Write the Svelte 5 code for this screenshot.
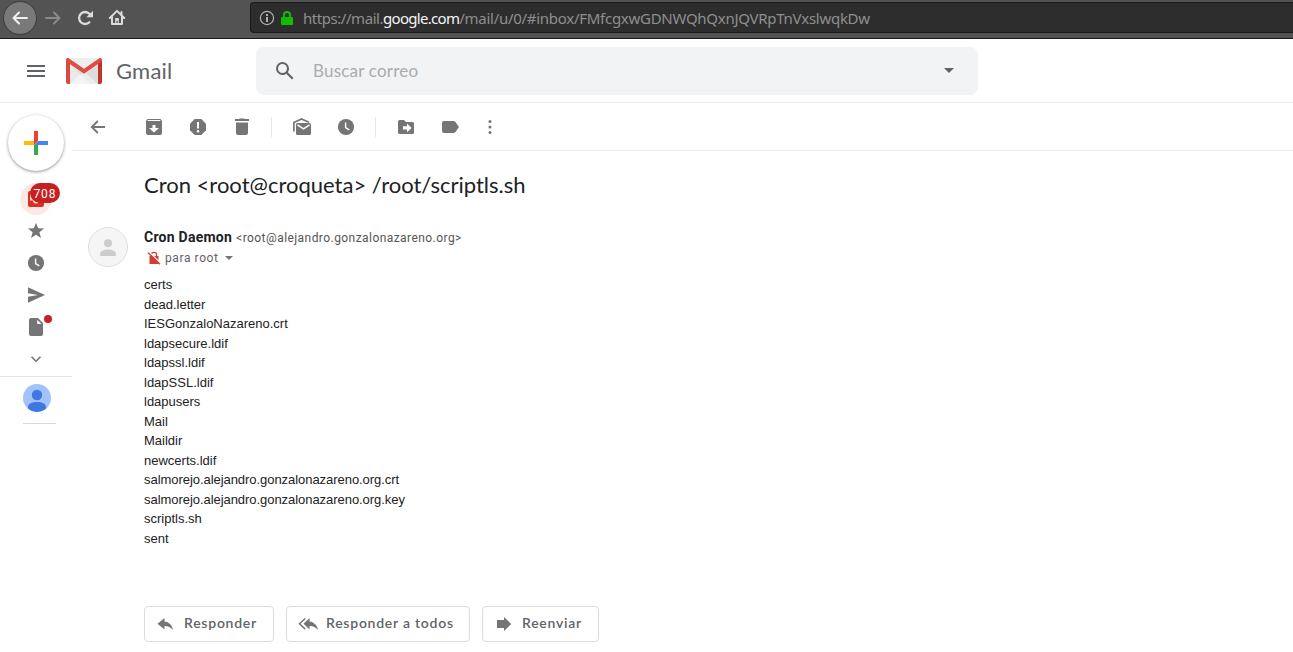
<script>
  const files = [
    'certs', 'dead.letter', 'IESGonzaloNazareno.crt', 'ldapsecure.ldif', 'ldapssl.ldif',
    'ldapSSL.ldif', 'ldapusers', 'Mail', 'Maildir', 'newcerts.ldif',
    'salmorejo.alejandro.gonzalonazareno.org.crt',
    'salmorejo.alejandro.gonzalonazareno.org.key', 'scriptls.sh', 'sent'
  ];
</script>

{#snippet clock()}
  <svg class="i20" viewBox="0 0 20 20"><circle cx="10" cy="10" r="8.1" fill="#757575" /><path d="M9.6 5.6v4.9l3.7 2.3" fill="none" stroke="#fff" stroke-width="1.4" /></svg>
{/snippet}

<div class="page">
  <div class="browser">
    <div class="back">
      <svg width="20" height="20" viewBox="0 0 20 20"><path d="M17 10H3.5M9 4.500 3.500 10l5.500 5.500" fill="none" stroke="#f0f0f0" stroke-width="2" stroke-linecap="round" stroke-linejoin="round" /></svg>
    </div>
    <svg class="fwd" width="20" height="20" viewBox="0 0 20 20"><path d="M3 10h13.500M11 4.500l5.500 5.500-5.500 5.500" fill="none" stroke="#8a8a8a" stroke-width="2" stroke-linecap="round" stroke-linejoin="round" /></svg>
    <svg class="reload" width="20" height="20" viewBox="0 0 20 20"><path d="M14.400 14.200A6 6 0 1 1 14.600 6" fill="none" stroke="#dcdcdc" stroke-width="2.300" stroke-linecap="round" /><path d="M18 2.800v6.400h-6.600z" fill="#dcdcdc" /></svg>
    <svg class="home" width="20" height="20" viewBox="0 0 20 20"><path d="M2.800 10 10 2.900l7.200 7.100M5 9v7h10V9M14.500 4v3" fill="none" stroke="#dcdcdc" stroke-width="2" stroke-linecap="round" stroke-linejoin="round" /><path d="M8.200 16v-6h3.600v6h-1.100v-3.200H9.500V16z" fill="#dcdcdc" /></svg>
    <div class="url">
      <svg width="16" height="16" viewBox="0 0 16 16"><circle cx="8" cy="8" r="6.600" fill="none" stroke="#b0b0b0" stroke-width="1.200" /><path d="M7 4h2v2H7zM7 7h2v5H7z" fill="#b0b0b0" /></svg>
      <svg class="lock" width="14" height="16" viewBox="0 0 14 16"><path d="M3.900 8V5a3.100 3.100 0 0 1 6.200 0v3" fill="none" stroke="#12bc00" stroke-width="2" /><rect x="1" y="7" width="12" height="8" rx="1" fill="#12bc00" /></svg>
      <span class="address"><span class="scheme">https://mail.</span><b>google.com</b>/mail/u/0/#inbox/FMfcgxwGDNWQhQxnJQVRpTnVxslwqkDw</span>
    </div>
  </div>

  <header>
    <svg class="burger" width="18" height="12" viewBox="0 0 18 12"><path d="M0 1h18M0 6h18M0 11h18" stroke="#5f6368" stroke-width="2" /></svg>
    <svg class="logo" width="36" height="26" viewBox="0 0 36 26">
      <rect width="36" height="26" rx="2" fill="#e9e9e9" />
      <path d="M4 26 15 15l3 2 3-2 11 11z" fill="#f5f5f5" />
      <path d="M4 6 24 26h8V7L18 17z" fill="#d5d5d5" opacity=".65" />
      <path d="M4 26 18 14l14 12z" fill="#f3f3f3" opacity=".65" />
      <path d="M0 2v22a2 2 0 0 0 2 2h2V5z" fill="#d64b3f" />
      <path d="M36 2v22a2 2 0 0 1-2 2h-2V5z" fill="#c13529" />
      <path d="M1.500 0h33L18 11.500z" fill="#eee" />
      <path d="M0 2C0 .2 1.800-.4 3 .5L18 10.700 33 .5c1.300-.9 3-.2 3 1.500 0 .8-.3 1.500-1 2L18 15.800 1 4C.3 3.500 0 2.800 0 2z" fill="#df4d42" />
    </svg>
    <span class="brand">Gmail</span>
    <div class="search">
      <svg width="24" height="24" viewBox="0 0 24 24"><path fill="#5f6368" d="M20.490 19l-5.730-5.730C15.530 12.200 16 10.910 16 9.500A6.500 6.500 0 1 0 9.500 16c1.410 0 2.700-.47 3.770-1.240L19 20.490 20.490 19zM5 9.500C5 7.010 7.010 5 9.500 5S14 7.010 14 9.500 11.990 14 9.500 14 5 11.990 5 9.500z" /></svg>
      <span class="hint">Buscar correo</span>
      <svg class="drop" width="10" height="5" viewBox="0 0 10 5"><path d="M0 0h10L5 5z" fill="#5f6368" /></svg>
    </div>
  </header>

  <div class="body">
    <nav>
      <div class="compose">
        <svg width="24" height="24" viewBox="0 0 24 24"><path d="M10 0h4v10l-4 4z" fill="#ea4335" /><path d="M14 10h10v4H10z" fill="#4285f4" /><path d="M10 14h4v10h-4z" fill="#34a853" /><path d="M0 10h10v4H0z" fill="#fbbc05" /></svg>
      </div>
      <div class="item">
        <div class="inbox">
          <svg class="i20" viewBox="0 0 20 20"><rect x="2" y="2" width="16" height="16" rx="2" fill="#d93025" /><path d="M4 4h12v7.500h-3a3 3 0 0 1-6 0H4z" fill="#fce8e6" /></svg>
          <span class="count">708</span>
        </div>
      </div>
      <div class="item"><svg class="i20" viewBox="0 0 20 20"><path d="m10 1.700 2.100 5.600 6 .3-4.700 3.700 1.600 5.800-5-3.300-5 3.300 1.600-5.800-4.700-3.700 6-.3z" fill="#757575" /></svg></div>
      <div class="item">{@render clock()}</div>
      <div class="item"><svg class="i20" viewBox="0 0 20 20"><path d="M2 2.200 19 10 2 17.800v-6L12 10 2 8.200z" fill="#757575" /></svg></div>
      <div class="item">
        <div class="draft">
          <svg class="i20" viewBox="0 0 20 20"><path d="M5 1h7l5 5v11a2 2 0 0 1-2 2H5a2 2 0 0 1-2-2V3a2 2 0 0 1 2-2z" fill="#757575" /><path d="M11.200 2.800v4.100h4.300z" fill="#fff" /></svg>
          <span class="dot"></span>
        </div>
      </div>
      <div class="item"><svg class="i20" viewBox="0 0 20 20"><path d="m5.500 7.700 4.500 4.500 4.500-4.500" fill="none" stroke="#757575" stroke-width="1.600" /></svg></div>
      <div class="account">
        <svg width="28" height="28" viewBox="0 0 28 28"><circle cx="14" cy="14" r="14" fill="#a1c2fa" /><circle cx="14" cy="11" r="5.200" fill="#4175df" /><path d="M5 24.600v-1.300c0-3.600 4-5.300 9-5.300s9 1.700 9 5.300v1.300a14 14 0 0 1-18 0z" fill="#4175df" /></svg>
        <div class="rule"></div>
      </div>
    </nav>

    <main>
      <div class="tools">
        <svg class="i20" viewBox="0 0 20 20"><path d="M17 10H4M9.800 4 3.800 10l6 6" fill="none" stroke="#757575" stroke-width="1.900" /></svg>
        <svg class="i20 archive" viewBox="0 0 20 20"><path fill-rule="evenodd" fill="#757575" d="M3.500 2h13L18 4v12a2 2 0 0 1-2 2H4a2 2 0 0 1-2-2V4zM4 3.100 3.500 4h13l-.5-.9zM8.500 8v3H5l5 4.500 5-4.500h-3.500V8z" /></svg>
        <svg class="i20 g24" viewBox="0 0 20 20"><path d="M6.700 2h6.600L18 6.700v6.600L13.300 18H6.700L2 13.300V6.700z" fill="#757575" /><path d="M9 5h2v6.500H9z" fill="#fff" /><circle cx="10" cy="14.300" r="1.200" fill="#fff" /></svg>
        <svg class="i20 g24" viewBox="0 0 20 20"><path d="M3 2h4l1-.5h4l1 .5h4v2H3zM4 5.500h12V16a2 2 0 0 1-2 2H6a2 2 0 0 1-2-2z" fill="#757575" /></svg>
        <span class="split"></span>
        <svg class="i20 g20" viewBox="0 0 20 20"><path d="M1.900 14.500V5.500L9.500 2 17 5.300" fill="none" stroke="#757575" stroke-width="1.700" /><rect x="4" y="6" width="15" height="12" rx="1.500" fill="#757575" /><path d="m5.500 7.800 6 4 6-4" fill="none" stroke="#fff" stroke-width="1.500" /></svg>
        <span class="g24 wrap">{@render clock()}</span>
        <span class="split second"></span>
        <svg class="i20 g20" viewBox="0 0 20 20"><path d="M3.500 3H8l2 2h6.500A1.500 1.500 0 0 1 18 6.500v9a1.500 1.500 0 0 1-1.500 1.500h-13A1.500 1.500 0 0 1 2 15.500v-11A1.500 1.500 0 0 1 3.500 3z" fill="#757575" /><path d="M7 9.200h4V6.500l4.700 4.400-4.700 4.400v-2.700H7z" fill="#fff" /></svg>
        <svg class="i20 g24" viewBox="0 0 20 20"><path d="M4 4h9.700a2 2 0 0 1 1.600.8L19 10l-3.700 5.200a2 2 0 0 1-1.600.8H4a2 2 0 0 1-2-2V6a2 2 0 0 1 2-2z" fill="#757575" /></svg>
        <svg class="i20 g20" viewBox="0 0 20 20"><g fill="#757575"><circle cx="10" cy="4.500" r="1.500" /><circle cx="10" cy="10" r="1.500" /><circle cx="10" cy="15.500" r="1.500" /></g></svg>
      </div>

      <h1><span>Cron &lt;root@croqueta&gt; /root/scriptls.sh</span></h1>

      <div class="message">
        <svg class="avatar" width="40" height="40" viewBox="0 0 40 40"><circle cx="20" cy="20" r="19.500" fill="#f5f5f5" stroke="#dedede" /><circle cx="20" cy="16.200" r="4" fill="#ccc" /><path d="M12.200 29v-2.500c0-2.500 4-4 7.800-4s7.800 1.500 7.800 4V29z" fill="#ccc" /></svg>
        <div class="content">
          <div class="from"><strong>Cron Daemon</strong><span class="mail">&lt;root@alejandro.gonzalonazareno.org&gt;</span></div>
          <div class="to">
            <svg width="14" height="14" viewBox="0 0 14 14"><path d="M4.300 6V4a2.700 2.700 0 0 1 5.400 0v2" fill="none" stroke="#d23f31" stroke-width="1.200" /><path d="M2.500 5h9v8h-9z" fill="#d23f31" /><path d="m1.800.8 12 11.500" stroke="#fff" stroke-width="1.300" /><path d="m1 1.700 12 11.500" stroke="#d23f31" stroke-width="1.400" /></svg>
            <span class="rcpt">para root</span>
            <svg class="small" width="8" height="4" viewBox="0 0 8 4"><path d="M0 0h8L4 4z" fill="#757575" /></svg>
          </div>
          <div class="lines">
            {#each files as file}<div class:long={file.length > 40}>{file}</div>{/each}
          </div>
          <div class="actions">
            <button class="reply"><svg class="i20" viewBox="0 0 20 20"><path d="M8.500 4v3.600c4.800.5 7.700 3.700 8.500 8.400-2.200-2.700-4.800-4-8.500-4v3.600L1.500 9.800z" fill="#757575" /></svg><span>Responder</span></button>
            <button class="all"><svg class="i20" viewBox="0 0 20 20"><path d="M11.500 4v3.600c4.500.5 7.700 3.700 8.500 8.400-2.200-2.700-4.800-4-8.500-4v3.600l-6-5.800z" fill="#757575" /><path d="M7.200 4.500 1.500 9.800l5.700 5.300" fill="none" stroke="#757575" stroke-width="1.500" /></svg><span>Responder a todos</span></button>
            <button class="forward"><svg class="i20" viewBox="0 0 20 20"><path d="M3 6h7V3l7.200 7-7.200 7v-3H3z" fill="#757575" /></svg><span>Reenviar</span></button>
          </div>
        </div>
      </div>
    </main>
  </div>
</div>

<style>
  :global(body) { background: #fff; overflow: hidden; }
  * { box-sizing: border-box; }
  svg { display: block; flex: none; }
  .i20 { width: 20px; height: 20px; }
  .page { width: 1293px; height: 652px; overflow: hidden; font-family: Roboto, sans-serif; color: #202124; }
  .browser { height: 39px; background: #535353; border-bottom: 1px solid #19191a; display: flex; align-items: center; padding-left: 3px; }
  .back { width: 34px; height: 34px; margin-top: -2px; border-radius: 50%; background: #797979; border: 1px solid #3c3c3c; display: grid; place-items: center; }
  .fwd { margin: -2px 0 0 6px; }
  .reload { margin: -2px 0 0 12px; }
  .home { margin: -2px 0 0 12px; }
  .url { margin: -3px 0 0 123px; flex: 1; height: 31px; background: #2d2d2d; border: 1px solid #1a1a1a; border-right: 0; border-radius: 4px 0 0 4px; display: flex; align-items: center; padding-left: 8px; }
  .lock { margin-left: 5px; }
  .address { font: 15px "Noto Sans", sans-serif; letter-spacing: -.28px; color: #8f8f8f; margin-left: 9px; white-space: nowrap; }
  .scheme { letter-spacing: -.45px; }
  .address b { font-weight: 400; letter-spacing: -.7px; color: #f5f5f5; }
  header { height: 64px; border-bottom: 1px solid #ebebeb; display: flex; align-items: center; padding-left: 27px; }
  .logo { margin-left: 21px; }
  .brand { font: 22px Lato, sans-serif; letter-spacing: .2px; color: #5f6368; margin-left: 14px; width: 57px; white-space: nowrap; }
  .search { margin-left: 83px; width: 722px; height: 48px; border-radius: 8px; background: #f1f3f4; display: flex; align-items: center; padding: 0 24px 0 17px; }
  .hint { font: 17px Lato, sans-serif; letter-spacing: .2px; color: #aaacae; margin-left: 16px; white-space: nowrap; }
  .drop { margin-left: auto; }
  .body { display: flex; height: 549px; }
  nav { width: 72px; padding-top: 12px; }
  .compose { width: 56px; height: 56px; margin: 0 8px 12px; border-radius: 50%; background: #fff; box-shadow: 0 1px 3px 1px rgba(60,64,67,.2), 0 1px 2px rgba(60,64,67,.3); display: grid; place-items: center; }
  .item { height: 32px; display: grid; place-items: center; }
  .inbox { position: relative; width: 32px; height: 32px; border-radius: 50%; background: #fce8e6; display: grid; place-items: center; }
  .count { position: absolute; left: 10px; top: 0; width: 30px; height: 20px; border-radius: 10px; background: #c5221f; color: #fff; font-size: 12px; line-height: 22px; letter-spacing: 1px; text-align: center; }
  .draft { position: relative; }
  .dot { position: absolute; left: 18px; top: -2px; width: 8px; height: 8px; border-radius: 50%; background: #c5221f; }
  .account { border-top: 1px solid #e4e4e4; margin-top: 1px; padding: 7px 0 0 23px; }
  .rule { width: 33px; height: 1px; background: #dadada; margin-top: 11px; }
  main { flex: 1; min-width: 0; }
  .tools { height: 48px; border-bottom: 1px solid #ebebeb; display: flex; align-items: center; padding: 1px 0 0 16px; }
  .archive { margin-left: 36px; }
  .g24 { margin-left: 24px; }
  .g20 { margin-left: 20px; }
  .split { width: 1px; height: 20px; background: #e6e6e6; margin-left: 19px; }
  .second { margin-left: 19px; }
  h1 { margin: 0; padding: 17px 0 0 72px; height: 76px; font: 22px/34px Lato, sans-serif; color: #202124; white-space: nowrap; }
  .message { display: flex; padding-left: 16px; }
  .content { margin-left: 16px; }
  .from { height: 20px; line-height: 20px; display: flex; white-space: nowrap; }
  .from strong { font-size: 14px; font-weight: 700; letter-spacing: .25px; }
  .mail { font-size: 12px; line-height: 22px; color: #555; letter-spacing: .44px; margin-left: 4px; }
  .to { height: 21px; display: flex; align-items: center; padding: 1px 0 0 3px; }
  .rcpt { font-size: 12px; color: #5f6368; letter-spacing: .6px; margin-left: 4px; }
  .small { margin-left: 6px; }
  .lines { margin-top: 7px; font: 13px/19.5px "Liberation Sans", Arial, sans-serif; color: #222; }
  .long { letter-spacing: -.05px; }
  .actions { display: flex; gap: 12px; margin-top: 58px; }
  button { height: 36px; border: 1px solid #dadce0; border-radius: 4px; background: #fff; padding: 0 0 0 11px; display: flex; align-items: center; color: #5f6368; font: 600 14px Lato, sans-serif; letter-spacing: .75px; white-space: nowrap; }
  button span { margin: -3px 0 0 8px; }
  .reply { width: 130px; }
  .all { width: 184px; }
  .forward { width: 117px; }
</style>
